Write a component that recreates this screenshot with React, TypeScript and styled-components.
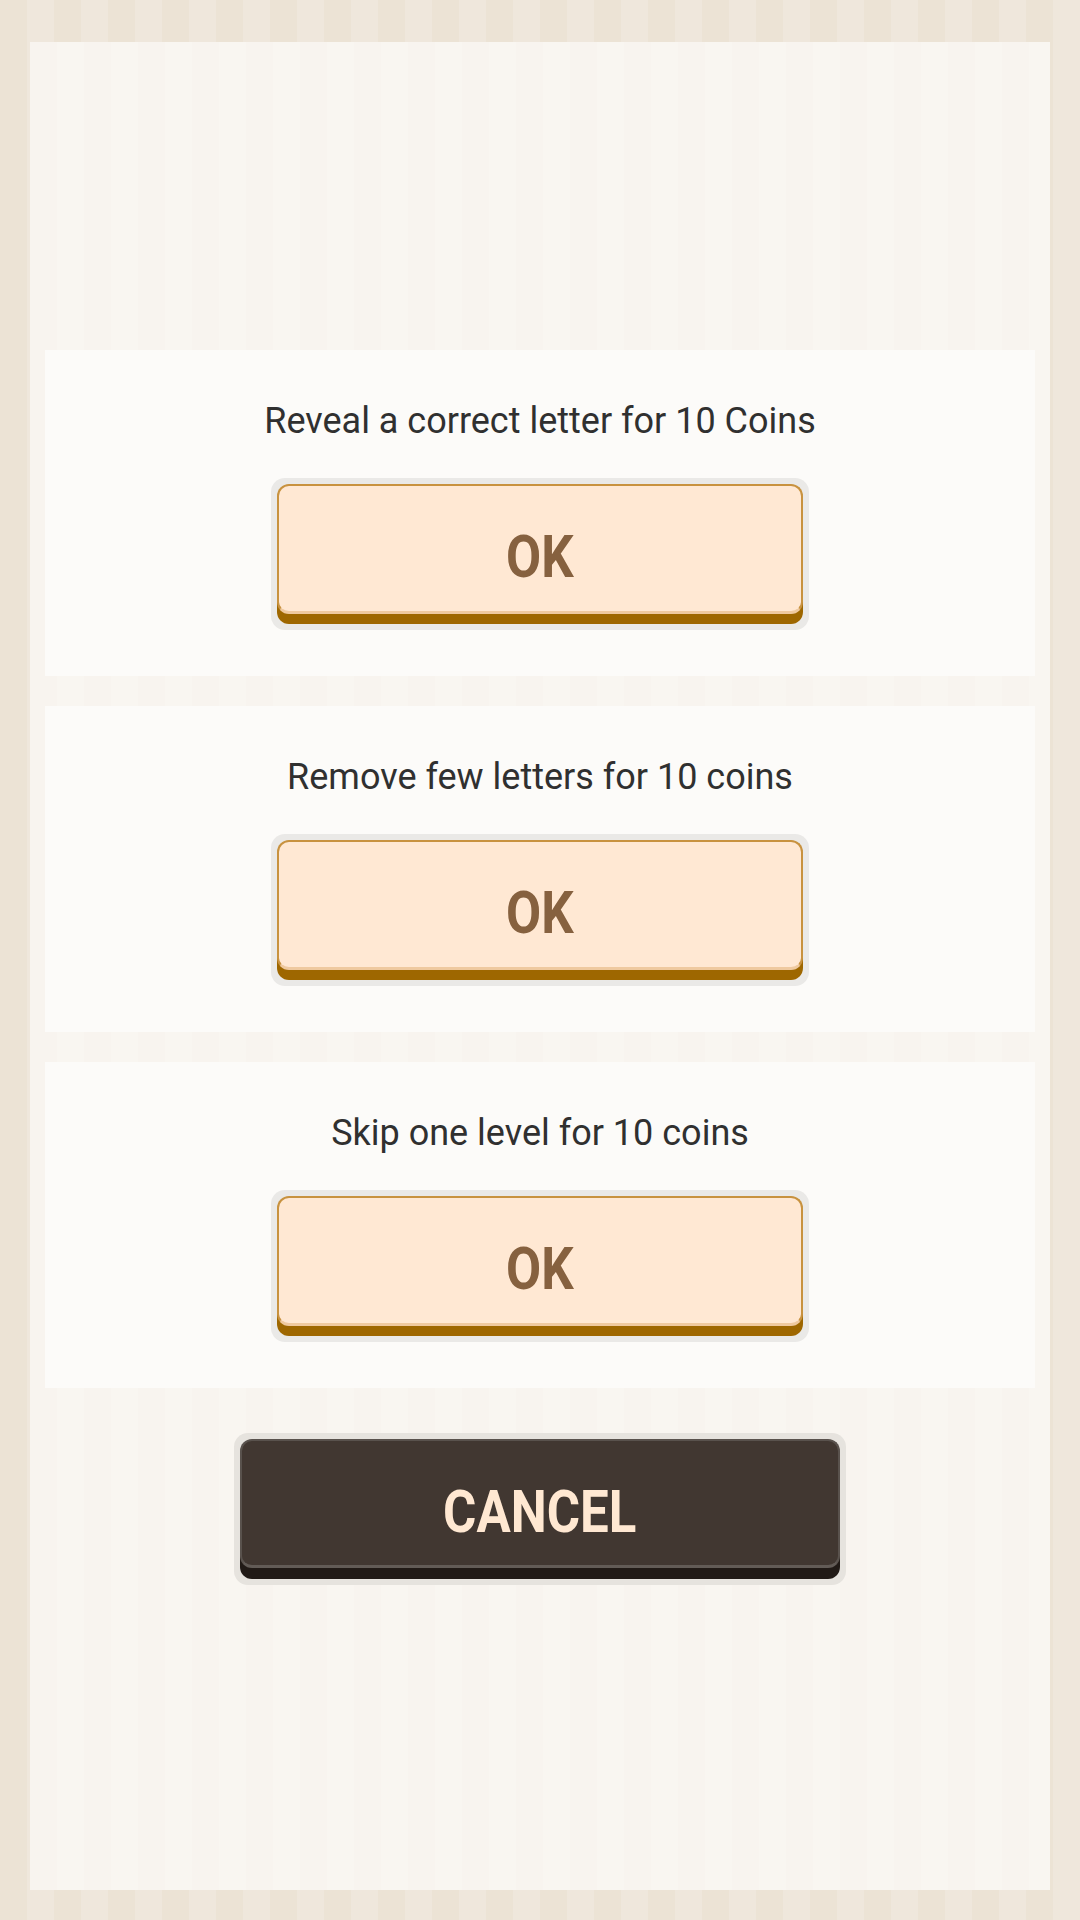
import React from 'react';
import styled, { createGlobalStyle } from 'styled-components';

const GlobalStyle = createGlobalStyle`
  html, body {
    margin: 0;
    padding: 0;
  }
  body {
    font-family: Roboto, "Noto Sans", sans-serif;
    background: repeating-linear-gradient(90deg, #ece3d5 0 27px, #efe7dc 27px 54px);
  }
`;

const Page = styled.div`
  box-sizing: border-box;
  min-height: 1920px;
  padding: 42px 30px 30px;
`;

const Dialog = styled.div`
  box-sizing: border-box;
  height: 1848px;
  padding: 308px 15px 0;
  display: flex;
  flex-direction: column;
  align-items: center;
  gap: 30px;
  background: repeating-linear-gradient(90deg, #f8f4ef 0 27px, #f9f6f1 27px 54px);
`;

const Card = styled.div`
  box-sizing: border-box;
  align-self: stretch;
  height: 326px;
  padding-top: 51px;
  display: flex;
  flex-direction: column;
  align-items: center;
  gap: 37px;
  background: #fcfbf9;
`;

const Message = styled.div`
  font-size: 36px;
  line-height: 40px;
  color: #303030;
`;

const Frame = styled.div<{ $width: number; $tone: string; $offset?: number }>`
  box-sizing: border-box;
  width: ${(p) => p.$width}px;
  height: 152px;
  margin-top: ${(p) => p.$offset ?? 0}px;
  padding: 6px 6px 16px;
  border-radius: 14px;
  background: ${(p) => p.$tone};
`;

const Face = styled.button<{ $variant: 'ok' | 'cancel' }>`
  box-sizing: border-box;
  width: 100%;
  height: ${(p) => (p.$variant === 'ok' ? 130 : 129)}px;
  padding: ${(p) => (p.$variant === 'ok' ? 17 : 17)}px 0 0;
  display: flex;
  align-items: center;
  justify-content: center;
  border-radius: 12px;
  cursor: pointer;
  font-family: Roboto, "Noto Sans", sans-serif;
  font-weight: 700;
  font-size: 60px;
  line-height: 60px;
  background: ${(p) => (p.$variant === 'ok' ? '#ffe8d3' : '#413731')};
  color: ${(p) => (p.$variant === 'ok' ? '#86613f' : '#ffe8d2')};
  border: 2px solid ${(p) => (p.$variant === 'ok' ? '#c8923f' : '#59524d')};
  border-bottom: 3px solid ${(p) => (p.$variant === 'ok' ? '#efc99f' : '#625b56')};
  box-shadow: 0 ${(p) => (p.$variant === 'ok' ? 10 : 11)}px 0
    ${(p) => (p.$variant === 'ok' ? '#9e6700' : '#211a16')};
`;

const Label = styled.span`
  display: inline-block;
  transform: scaleX(0.85);
`;

const offers = [
  'Reveal a correct letter for 10 Coins',
  'Remove few letters for 10 coins',
  'Skip one level for 10 coins',
];

export default function App() {
  return (
    <>
      <GlobalStyle />
      <Page>
        <Dialog>
          {offers.map((text) => (
            <Card key={text}>
              <Message>{text}</Message>
              <Frame $width={538} $tone="#eae9e7">
                <Face $variant="ok">
                  <Label>OK</Label>
                </Face>
              </Frame>
            </Card>
          ))}
          <Frame $width={612} $tone="#e6e3de" $offset={15}>
            <Face $variant="cancel">
              <Label>CANCEL</Label>
            </Face>
          </Frame>
        </Dialog>
      </Page>
    </>
  );
}
